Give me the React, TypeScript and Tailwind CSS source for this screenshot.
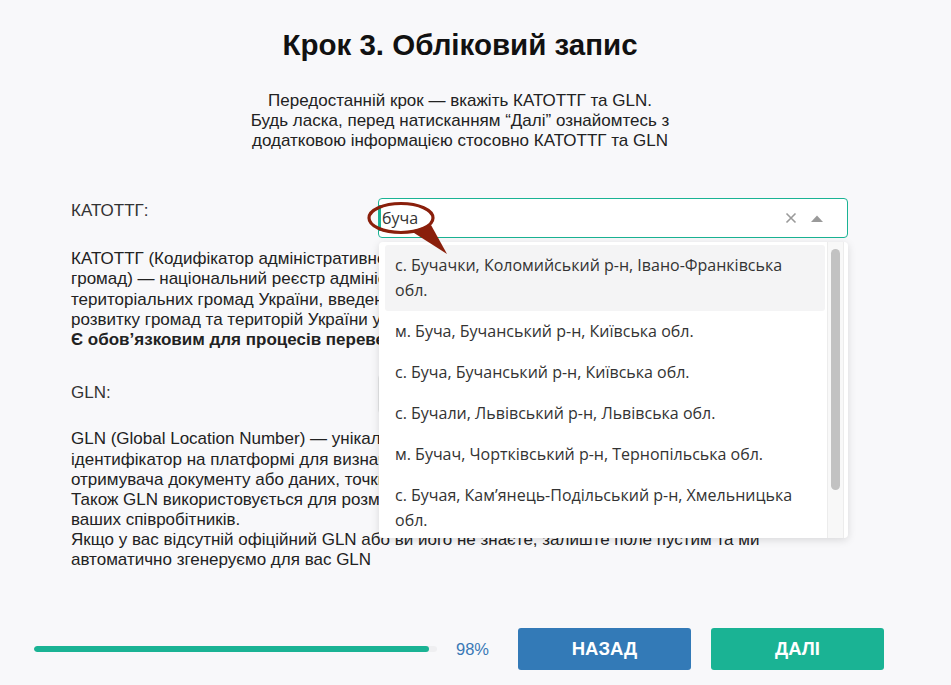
import React from "react";

const items: string[] = [
  "с. Бучачки, Коломийський р-н, Івано-Франківська обл.",
  "м. Буча, Бучанський р-н, Київська обл.",
  "с. Буча, Бучанський р-н, Київська обл.",
  "с. Бучали, Львівський р-н, Львівська обл.",
  "м. Бучач, Чортківський р-н, Тернопільська обл.",
  "с. Бучая, Кам’янець-Подільський р-н, Хмельницька обл.",
  "с. Бучин, Рівненський р-н, Рівненська обл.",
];

export default function App() {
  return (
    <div
      className="min-h-[685px] w-full bg-[#f8f8fa] flex flex-col text-[#222]"
      style={{ fontFamily: '"Liberation Sans", Arial, sans-serif' }}
    >
      <div className="pr-[31px]">
        <h1 className="pt-[28px] text-center text-[29.5px] leading-[34px] font-bold text-[#111]">
          Крок 3. Обліковий запис
        </h1>
        <p className="mt-[29px] text-center text-[17px] leading-[20px] text-[#222]">
          Передостанній крок — вкажіть КАТОТТГ та GLN.
          <br />
          Будь ласка, перед натисканням “Далі” ознайомтесь з
          <br />
          додатковою інформацією стосовно КАТОТТГ та GLN
        </p>
      </div>

      <div className="ml-[71px] w-[777px] mt-[47px]">
        {/* KATOTTG row */}
        <div className="flex">
          <div className="flex-1 pt-[3px] text-[17px] leading-[20px] text-[#333]">КАТОТТГ:</div>
          <div className="relative w-[470px] h-[40px]">
            <div className="h-full w-full rounded-[4px] border border-[#1ab394] bg-white flex items-center">
              <div className="w-[2px] h-[26px] bg-[#1ab394]" />
              <span
                className="ml-[1px] text-[16px] text-[#333]"
                style={{ fontFamily: '"Open Sans", "Noto Sans", sans-serif' }}
              >
                буча
              </span>
              <div className="ml-auto flex items-center">
                <svg width="12" height="12" viewBox="0 0 12 12" className="mr-[14px]">
                  <path d="M1.5 1.5 L10.5 10.5 M10.5 1.5 L1.5 10.5" stroke="#9a9a9a" strokeWidth="1.6" />
                </svg>
                <svg width="12" height="7" viewBox="0 0 12 7" className="mr-[24px]">
                  <path d="M0 7 L6 0.5 L12 7 Z" fill="#9a9a9a" />
                </svg>
              </div>
            </div>

            {/* dropdown */}
            <div
              className="absolute left-[1px] top-[44px] w-[469px] h-[296px] rounded-[4px] bg-white shadow-[0_2px_8px_rgba(0,0,0,0.13)] z-10 flex overflow-hidden"
              style={{ fontFamily: '"Open Sans", "Noto Sans", sans-serif' }}
            >
              <div className="flex-1 pl-[6px] pr-[2px] pt-[3px] overflow-hidden">
                {items.map((t, i) => (
                  <div
                    key={i}
                    className={
                      "px-[10px] py-[8px] text-[16px] leading-[25px] text-[#333] rounded-[3px] " +
                      (i === 0 ? "bg-[#f4f4f5]" : "")
                    }
                  >
                    {t}
                  </div>
                ))}
              </div>
              <div className="w-[17px] h-full border-l border-r border-[#ececec] bg-[#f8f8f8] flex justify-center pt-[7px]">
                <div className="w-[9px] h-[241px] rounded-full bg-[#c2c2c2]" />
              </div>
              <div className="w-[4px]" />
            </div>

            {/* callout annotation */}
            <svg
              className="absolute left-[-14px] top-[-10px] z-20 pointer-events-none"
              width="90"
              height="70"
              viewBox="364 188 90 70"
            >
              <ellipse cx="401" cy="218" rx="32" ry="14.5" fill="none" stroke="#8a1f0b" strokeWidth="3.2" />
              <path d="M411 231 L431 225 L447 254 Z" fill="#8a1f0b" />
            </svg>
          </div>
        </div>
        <p className="mt-[11px] text-[17px] leading-[20.3px]">
          КАТОТТГ (Кодифікатор адміністративно-територіальних одиниць
          <br />
          громад) — національний реєстр адміністративно-територіальних
          <br />
          територіальних громад України, введений Міністерством
          <br />
          розвитку громад та територій України у 2020 році.
          <br />
          <b>Є обов’язковим для процесів перевезення вантажів.</b>
        </p>

        {/* GLN row */}
        <div className="flex mt-[24px]">
          <div className="flex-1 pt-[9px] text-[17px] leading-[20px] text-[#333]">GLN:</div>
          <div className="w-[470px] h-[40px] rounded-[4px] border border-[#e5e6e7] bg-white" />
        </div>
        <p className="mt-[15px] text-[17px] leading-[20.1px]">
          GLN (Global Location Number) — унікальний глобальний
          <br />
          ідентифікатор на платформі для визначення відправника
          <br />
          отримувача документу або даних, точки доставки.
          <br />
          Також GLN використовується для розмежування доступу
          <br />
          ваших співробітників.
          <br />
          Якщо у вас відсутній офіційний GLN або ви його не знаєте, залиште поле пустим та ми
          <br />
          автоматично згенеруємо для вас GLN
        </p>
      </div>

      {/* bottom bar */}
      <div className="mt-auto pb-[15px] flex items-center pl-[34px]">
        <div className="w-[403px] h-[6px] rounded-full bg-[#efeff1] overflow-hidden">
          <div className="h-full rounded-full bg-[#1ab394]" style={{ width: "98%" }} />
        </div>
        <div className="ml-[19px] text-[16.5px] text-[#3a78b6]">98%</div>
        <button className="ml-[29px] w-[173px] h-[42px] rounded-[3px] bg-[#337ab7] text-white font-bold text-[18.5px]">
          НАЗАД
        </button>
        <button className="ml-[20px] w-[173px] h-[42px] rounded-[3px] bg-[#1ab394] text-white font-bold text-[18.5px]">
          ДАЛІ
        </button>
      </div>
    </div>
  );
}
